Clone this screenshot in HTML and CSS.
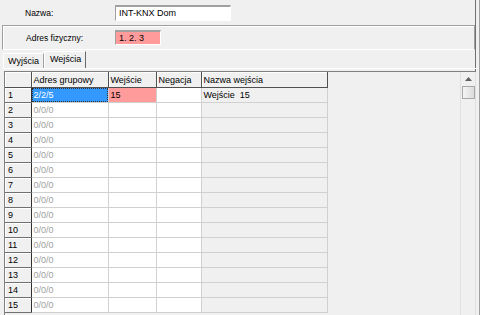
FILE: index.html
```html
<!DOCTYPE html>
<html lang="pl">
<head>
    <meta charset="UTF-8">
    <title>INT-KNX Dom</title>
    <link rel="stylesheet" href="styles.css">
</head>
<body>
    <div class="win">
        <!-- nazwa modulu -->
        <div class="row-name">
            <span class="lbl">Nazwa:</span>
            <div class="edit">INT-KNX Dom</div>
        </div>

        <!-- adres fizyczny -->
        <div class="group">
            <span class="lbl">Adres fizyczny:</span>
            <div class="edit pink">1. 2. 3</div>
        </div>

        <!-- zakladki -->
        <div class="tabs">
            <div class="tab">Wyjścia</div>
            <div class="tab active">Wejścia</div>
        </div>

        <div class="panel">
            <div class="grid">
                <div class="grid-body">
                    <table class="tbl">
                        <colgroup>
                            <col class="c-num">
                            <col class="c-adr">
                            <col class="c-we">
                            <col class="c-neg">
                            <col class="c-naz">
                        </colgroup>
                        <thead>
                            <tr>
                                <th></th>
                                <th>Adres grupowy</th>
                                <th>Wejście</th>
                                <th>Negacja</th>
                                <th>Nazwa wejścia</th>
                            </tr>
                        </thead>
                        <tbody>
                            <tr>
                                <th>1</th>
                                <td class="sel"><span class="focus">2/2/5</span></td>
                                <td class="pinkcell">15</td>
                                <td></td>
                                <td class="ro">Wejście&nbsp; 15</td>
                            </tr>
                            <tr><th>2</th><td class="dim">0/0/0</td><td></td><td></td><td class="ro"></td></tr>
                            <tr><th>3</th><td class="dim">0/0/0</td><td></td><td></td><td class="ro"></td></tr>
                            <tr><th>4</th><td class="dim">0/0/0</td><td></td><td></td><td class="ro"></td></tr>
                            <tr><th>5</th><td class="dim">0/0/0</td><td></td><td></td><td class="ro"></td></tr>
                            <tr><th>6</th><td class="dim">0/0/0</td><td></td><td></td><td class="ro"></td></tr>
                            <tr><th>7</th><td class="dim">0/0/0</td><td></td><td></td><td class="ro"></td></tr>
                            <tr><th>8</th><td class="dim">0/0/0</td><td></td><td></td><td class="ro"></td></tr>
                            <tr><th>9</th><td class="dim">0/0/0</td><td></td><td></td><td class="ro"></td></tr>
                            <tr><th>10</th><td class="dim">0/0/0</td><td></td><td></td><td class="ro"></td></tr>
                            <tr><th>11</th><td class="dim">0/0/0</td><td></td><td></td><td class="ro"></td></tr>
                            <tr><th>12</th><td class="dim">0/0/0</td><td></td><td></td><td class="ro"></td></tr>
                            <tr><th>13</th><td class="dim">0/0/0</td><td></td><td></td><td class="ro"></td></tr>
                            <tr><th>14</th><td class="dim">0/0/0</td><td></td><td></td><td class="ro"></td></tr>
                            <tr><th>15</th><td class="dim">0/0/0</td><td></td><td></td><td class="ro"></td></tr>
                        </tbody>
                    </table>
                </div>
                <!-- pasek przewijania -->
                <div class="vscroll">
                    <div class="arrow">
                        <svg width="7" height="4" viewBox="0 0 7 4"><polygon points="0,4 7,4 3.5,0" fill="#606060"></polygon></svg>
                    </div>
                    <div class="thumb"></div>
                </div>
            </div>
        </div>
    </div>
</body>
</html>
```

FILE: styles.css
```css
html,body{
    margin: 0;
    padding: 0;
}
body{
    background: #f0f0f0;
    font-family: "Liberation Sans", Arial, sans-serif;
    font-size: 8.5px;
    color: #000;
    width: 480px;
    height: 315px;
    overflow: hidden;
}
.win{
    height: 315px;
    border-right: 1px solid #a0a0a0;
    box-shadow: inset -3px 0 0 #f0f0f0, inset -4px 0 0 #707070;
    box-sizing: border-box;
    display: flex;
    flex-direction: column;
}

/* pola gorne */
.row-name{
    display: flex;
    align-items: center;
    height: 25px;
    padding-left: 25px;
}
.lbl{
    width: 90px;
}
.edit{
    box-sizing: border-box;
    width: 116px;
    height: 16px;
    background: #fff;
    border-top: 2px solid #a0a0a0;
    border-left: 1px solid #a0a0a0;
    border-right: 1px solid #fff;
    border-bottom: 1px solid #fff;
    padding: 0 3px;
    line-height: 13px;
    font-size: 9px;
}
.group{
    display: flex;
    align-items: center;
    height: 23px;
    margin: 0 4px 0 2px;
    padding-left: 23px;
    border-top: 1px solid #a0a0a0;
    border-left: 1px solid #a0a0a0;
    border-bottom: 1px solid #fff;
    border-right: 1px solid #a0a0a0;
    box-shadow: inset 1px 1px 0 #fff;
}
.group .edit.pink{
    width: 46px;
    height: 15px;
    background: #ff9b9b;
    margin-left: -1px;
}

/* zakladki */
.tabs{
    display: flex;
    align-items: flex-end;
    height: 17px;
    padding-left: 3px;
    margin-top: 1px;
}
.tab{
    box-sizing: border-box;
    height: 15px;
    padding: 0 4px;
    line-height: 14px;
    border-top: 1px solid #fff;
    border-left: 1px solid #fff;
    border-right: 1px solid #a0a0a0;
    font-size: 9px;
}
.tab.active{
    height: 17px;
    border-right: 1px solid #696969;
    padding: 0 4px 0 5px;
    line-height: 15px;
}

/* panel z tabela */
.panel{
    flex: 1;
    border-top: 1px solid #fff;
    margin-left: 3px;
    padding: 2px 3px 0 1px;
    display: flex;
}
.grid{
    flex: 1;
    display: flex;
    border-top: 1px solid #808080;
    border-left: 1px solid #808080;
    background: #f0f0f0;
    overflow: hidden;
}
.grid-body{
    flex: 1;
}
.tbl{
    border-collapse: collapse;
    table-layout: fixed;
    width: 322px;
}
.c-num{ width: 26px; }
.c-adr{ width: 77px; }
.c-we{ width: 48px; }
.c-neg{ width: 45px; }
.c-naz{ width: 126px; }

.tbl th,
.tbl td{
    height: 14px;
    padding: 0 0 0 2px;
    text-align: left;
    font-weight: normal;
    white-space: nowrap;
    overflow: hidden;
    line-height: 14px;
    font-size: 9px;
}
.tbl thead th{
    height: 15px;
    background: #f0f0f0;
    border-right: 1px solid #505050;
    border-bottom: 1px solid #505050;
    box-shadow: inset 1px 1px 0 #fff;
}
.tbl tbody th{
    background: #f0f0f0;
    border-right: 1px solid #303030;
    border-bottom: 1px solid #707070;
    box-shadow: inset 1px 1px 0 #fff;
    padding-left: 3px;
}
.tbl td{
    background: #fff;
    border-right: 1px solid #d0d0d0;
    border-bottom: 1px solid #d0d0d0;
}
.tbl td.ro{
    background: #f0f0f0;
}
.tbl td.dim{
    color: #a0a0a0;
}
.tbl td.sel{
    background: #3399ff;
    color: #fff;
    padding: 0;
}
.focus{
    display: block;
    box-sizing: border-box;
    height: 14px;
    line-height: 12px;
    padding-left: 1px;
    border: 1px dotted #303030;
}
.tbl td.pinkcell{
    background: #ff9b9b;
}

/* scroll */
.vscroll{
    width: 14px;
    border-left: 1px solid #e0e0e0;
    border-right: 1px solid #e0e0e0;
    background: #f0f0f0;
    display: flex;
    flex-direction: column;
    align-items: center;
}
.arrow{
    height: 14px;
    display: flex;
    align-items: center;
    justify-content: center;
}
.thumb{
    box-sizing: border-box;
    width: 13px;
    height: 13px;
    border: 1px solid #a8a8a8;
    background: linear-gradient(to right,#f4f4f4,#dcdcdc);
}
```
